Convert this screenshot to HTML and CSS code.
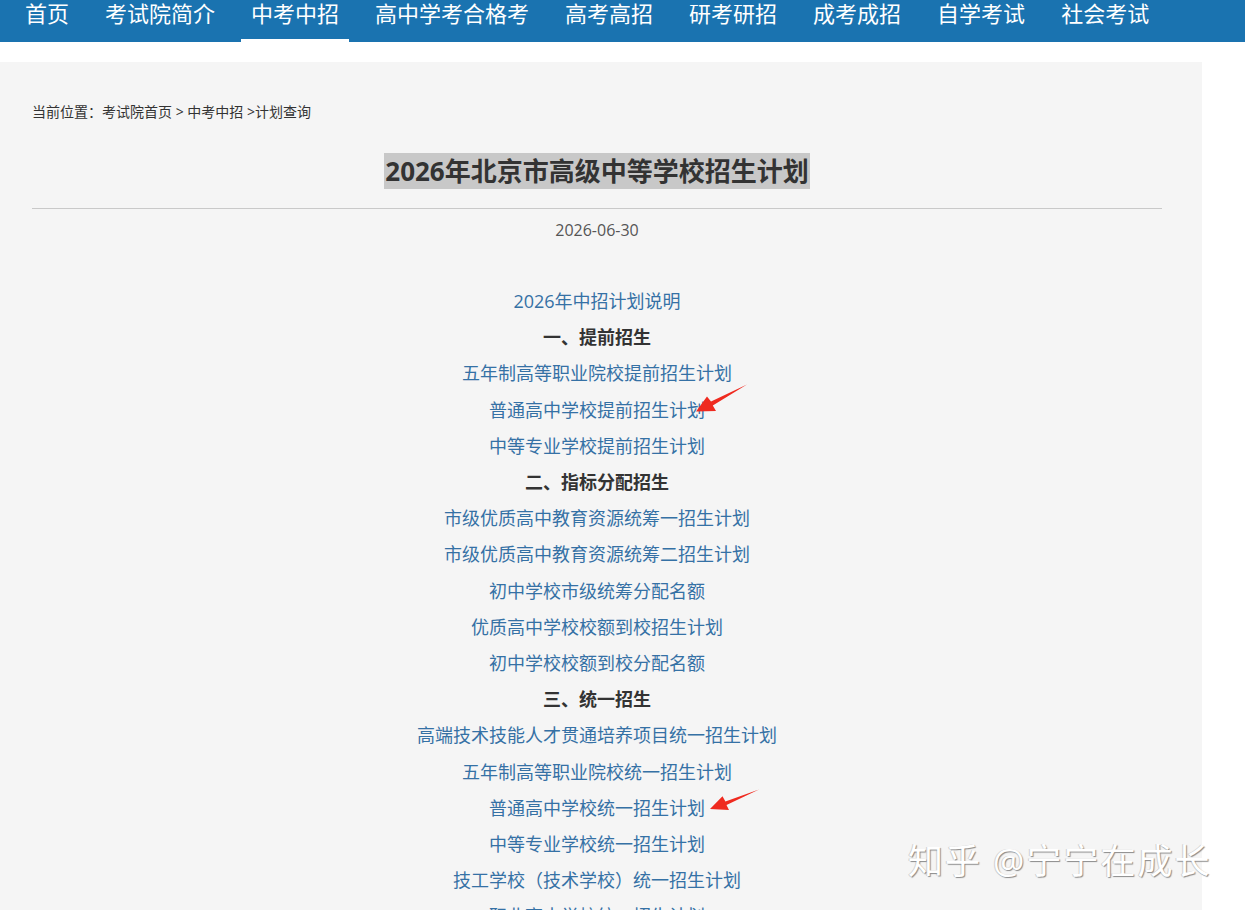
FILE: index.html
```html
<!DOCTYPE html>
<html lang="zh-CN">
<head>
    <meta charset="UTF-8">
    <meta name="viewport" content="width=device-width, initial-scale=1.0">
    <title>2026年北京市高级中等学校招生计划</title>

    <link rel="stylesheet" href="styles.css">
</head>

<body>

    <!-- NAV -->
    <nav id="nav">
        <a class="nav-item" href="#">首页</a>
        <a class="nav-item" href="#">考试院简介</a>
        <a class="nav-item active" href="#">中考中招</a>
        <a class="nav-item" href="#">高中学考合格考</a>
        <a class="nav-item" href="#">高考高招</a>
        <a class="nav-item" href="#">研考研招</a>
        <a class="nav-item" href="#">成考成招</a>
        <a class="nav-item" href="#">自学考试</a>
        <a class="nav-item" href="#">社会考试</a>
    </nav>


    <section id="main">

        <div class="crumbs">当前位置：<a href="#">考试院首页</a> &gt; <a href="#">中考中招</a> &gt;计划查询</div>

        <h1 class="title"><span>2026年北京市高级中等学校招生计划</span></h1>

        <div class="date">2026-06-30</div>

        <div class="plan">
            <p><a href="#">2026年中招计划说明</a></p>
            <p class="group">一、提前招生</p>
            <p><a href="#">五年制高等职业院校提前招生计划</a></p>
            <p><a href="#">普通高中学校提前招生计划</a></p>
            <p><a href="#">中等专业学校提前招生计划</a></p>
            <p class="group">二、指标分配招生</p>
            <p><a href="#">市级优质高中教育资源统筹一招生计划</a></p>
            <p><a href="#">市级优质高中教育资源统筹二招生计划</a></p>
            <p><a href="#">初中学校市级统筹分配名额</a></p>
            <p><a href="#">优质高中学校校额到校招生计划</a></p>
            <p><a href="#">初中学校校额到校分配名额</a></p>
            <p class="group">三、统一招生</p>
            <p><a href="#">高端技术技能人才贯通培养项目统一招生计划</a></p>
            <p><a href="#">五年制高等职业院校统一招生计划</a></p>
            <p><a href="#">普通高中学校统一招生计划</a></p>
            <p><a href="#">中等专业学校统一招生计划</a></p>
            <p><a href="#">技工学校（技术学校）统一招生计划</a></p>
            <p><a href="#">职业高中学校统一招生计划</a></p>
        </div>

        <!-- red marks -->
        <svg class="mark mark-1" width="60" height="34" viewBox="0 0 60 34">
            <polygon points="4,29.5 15,14.5 19,19.4 55,2.5 20.8,23.6 24,29" fill="#ef2a1f"/>
        </svg>
        <svg class="mark mark-2" width="56" height="28" viewBox="0 0 56 28">
            <polygon points="4,23 16.5,10.3 19.4,15.5 53,3.5 20.5,19.1 23,24" fill="#ef2a1f"/>
        </svg>

        <div class="stamp">知乎 @宁宁在成长</div>

    </section>

</body>
</html>
```

FILE: styles.css
```css
*{
    margin: 0;
    padding: 0;
    box-sizing: border-box;
}


body{
    font-family: "Open Sans", "Noto Sans CJK SC", sans-serif;
    background-color: #fff;
    color: #333;
    overflow: hidden;
}

a{
    text-decoration: none;
    color: inherit;
}



/* top menu */
#nav{
    display: flex;
    gap: 16px;
    height: 42px;
    padding-left: 15px;
    background-color: #1a73b0;
}

.nav-item{
    display: block;
    padding: 0 10px 6px;
    font-size: 22px;
    line-height: 27px;
    color: #fff;
    border-bottom: 3px solid transparent;
}

.nav-item.active{
    border-bottom-color: #fff;
}



/* content box */
#main{
    position: relative;
    width: 1202px;
    min-height: 860px;
    margin-top: 20px;
    padding: 40px 40px 0 32px;
    background-color: #f5f5f5;
}


.crumbs{
    font-size: 14px;
    line-height: 20px;
    color: #333;
}


.title{
    margin-top: 31px;
    padding-bottom: 18px;
    border-bottom: 1px solid #c9c9c9;
    text-align: center;
    font-size: 26px;
    line-height: 37px;
    font-weight: bold;
    color: #333;
}

.title span{
    background-color: #c8c8c8;
    padding: 0 1px;
}


.date{
    margin-top: 9px;
    text-align: center;
    font-size: 16px;
    line-height: 24px;
    color: #555;
}


.plan{
    margin-top: 41px;
    text-align: center;
    font-size: 18px;
    line-height: 36.2px;
}

.plan a{
    color: #3571a5;
}

.plan .group{
    font-weight: bold;
    color: #333;
}



.mark{
    position: absolute;
}

.mark-1{
    left: 692px;
    top: 320px;
}

.mark-2{
    left: 706px;
    top: 724px;
}


.stamp{
    position: absolute;
    left: 908px;
    top: 779px;
    font-size: 35px;
    line-height: 40px;
    letter-spacing: 2px;
    color: #fff;
    text-shadow: 1px 1px 1px #8a8a8a, -1px 0 0 #d0d0d0;
    white-space: nowrap;
}
```
